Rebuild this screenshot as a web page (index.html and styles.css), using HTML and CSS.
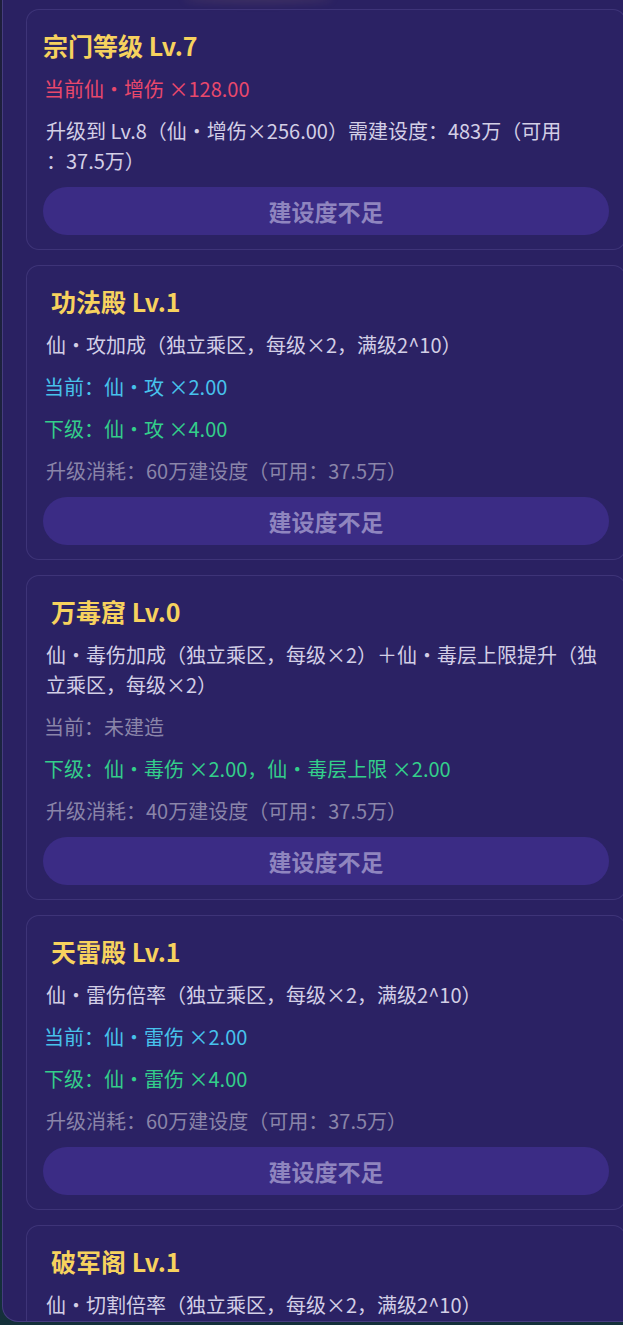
FILE: index.html
```html
<!DOCTYPE html>
<html lang="zh-CN">
<head>
<meta charset="utf-8">
<title>宗门建筑</title>
<link rel="stylesheet" href="styles.css">
</head>
<body>
<div class="panel">
  <div class="glow"></div>
  <section class="card">
    <h2 class="title">宗门等级 Lv.7</h2>
    <p class="line red">当前仙・增伤 ×128.00</p>
    <p class="line desc">升级到 Lv.8（仙・增伤×256.00）需建设度：483万（可用<br>：37.5万）</p>
    <div class="btn">建设度不足</div>
  </section>

  <section class="card">
    <h2 class="title indent">功法殿 Lv.1</h2>
    <p class="line desc">仙・攻加成（独立乘区，每级×2，满级2^10）</p>
    <p class="line cur">当前：仙・攻 ×2.00</p>
    <p class="line next">下级：仙・攻 ×4.00</p>
    <p class="line cost">升级消耗：60万建设度（可用：37.5万）</p>
    <div class="btn">建设度不足</div>
  </section>

  <section class="card">
    <h2 class="title indent">万毒窟 Lv.0</h2>
    <p class="line desc">仙・毒伤加成（独立乘区，每级×2）＋仙・毒层上限提升（独立乘区，每级×2）</p>
    <p class="line cost">当前：未建造</p>
    <p class="line next">下级：仙・毒伤 ×2.00，仙・毒层上限 ×2.00</p>
    <p class="line cost">升级消耗：40万建设度（可用：37.5万）</p>
    <div class="btn">建设度不足</div>
  </section>

  <section class="card">
    <h2 class="title indent">天雷殿 Lv.1</h2>
    <p class="line desc">仙・雷伤倍率（独立乘区，每级×2，满级2^10）</p>
    <p class="line cur">当前：仙・雷伤 ×2.00</p>
    <p class="line next">下级：仙・雷伤 ×4.00</p>
    <p class="line cost">升级消耗：60万建设度（可用：37.5万）</p>
    <div class="btn">建设度不足</div>
  </section>

  <section class="card">
    <h2 class="title indent">破军阁 Lv.1</h2>
    <p class="line desc">仙・切割倍率（独立乘区，每级×2，满级2^10）</p>
  </section>
</div>
</body>
</html>
```

FILE: styles.css
```css
html, body {
  margin: 0;
  padding: 0;
  height: 100%;
  overflow: hidden;
}
body {
  background: linear-gradient(180deg, #1e1f3c 0%, #1b2540 60%, #14303a 100%);
  font-family: "Noto Sans CJK SC", "Noto Sans", sans-serif;
}
.panel {
  position: relative;
  margin-left: 2px;
  height: 1322px;
  box-sizing: border-box;
  padding-top: 9px;
  padding-left: 23px;
  background: #2a2162;
  border-left: 1px solid rgba(170, 160, 230, 0.22);
  border-bottom: 1px solid rgba(170, 160, 230, 0.22);
  border-bottom-left-radius: 16px;
  overflow: hidden;
  display: flex;
  flex-direction: column;
  gap: 15px;
}
.glow {
  position: absolute;
  top: -6px;
  left: 180px;
  width: 150px;
  height: 9px;
  border-radius: 50%;
  background: rgba(220, 170, 110, 0.12);
  filter: blur(4px);
}
.card {
  flex: none;
  width: 600px;
  box-sizing: border-box;
  padding: 19px 16px 14px 16px;
  background: #2b2264;
  border: 1px solid rgba(160, 150, 230, 0.16);
  border-radius: 13px;
  display: flex;
  flex-direction: column;
  gap: 12px;
}
.title {
  margin: 0 0 1px 0;
  font-size: 25px;
  line-height: 32px;
  font-weight: 700;
  color: #f7d25e;
}
.title.indent {
  padding-left: 8px;
}
.line {
  margin: 0;
  font-size: 20px;
  line-height: 30px;
  padding-left: 1px;
}
.red { color: #e9486c; }
.desc { color: #d3cfe6; padding-left: 3px; padding-right: 6px; }
.cur { color: #47c2ec; }
.next { color: #33cf8b; }
.cost { color: #8a85a9; }
.cost + .cost, .next + .cost { padding-left: 3px; }
.btn {
  margin-top: -1px;
  height: 48px;
  border-radius: 24px;
  background: #3b2c85;
  color: #8f85bf;
  font-size: 23px;
  font-weight: 700;
  display: flex;
  align-items: center;
  justify-content: center;
}
```
